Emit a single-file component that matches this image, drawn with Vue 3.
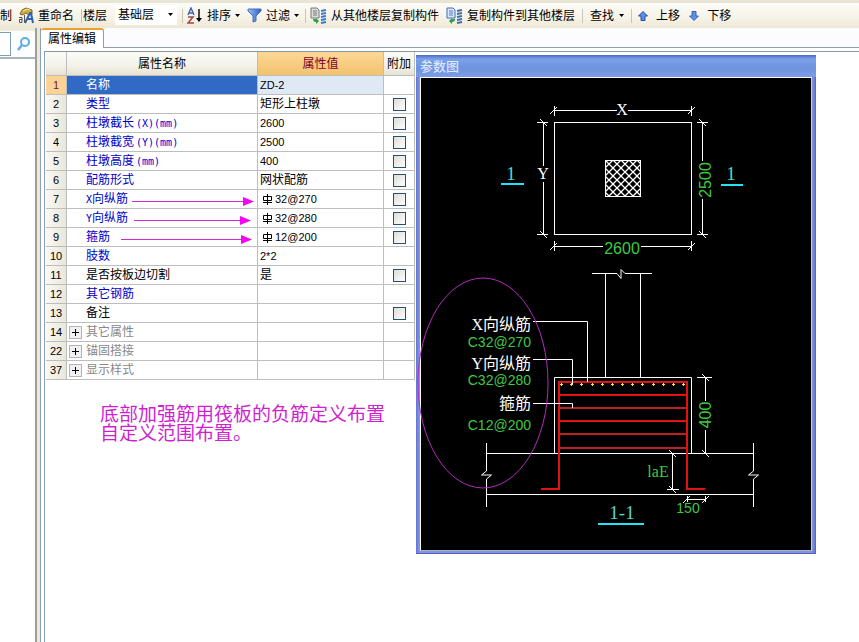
<script setup>
import { ref } from 'vue'

const floor = ref('基础层')
const keyword = ref('')

const rows = ref([
  { no: 1, name: '名称', value: 'ZD-2', type: 'current' },
  { no: 2, name: '类型', value: '矩形上柱墩', type: 'required', check: true, extra: false },
  { no: 3, name: '柱墩截长', unit: '(X)(mm)', value: '2600', type: 'required', check: true, extra: false },
  { no: 4, name: '柱墩截宽', unit: '(Y)(mm)', value: '2500', type: 'required', check: true, extra: false },
  { no: 5, name: '柱墩高度', unit: '(mm)', value: '400', type: 'required', check: true, extra: false },
  { no: 6, name: '配筋形式', value: '网状配筋', type: 'required', check: true, extra: false },
  { no: 7, prefix: 'X', name: '向纵筋', value: '32@270', rebar: true, type: 'required', check: true, extra: false },
  { no: 8, prefix: 'Y', name: '向纵筋', value: '32@280', rebar: true, type: 'required', check: true, extra: false },
  { no: 9, name: '箍筋', value: '12@200', rebar: true, type: 'required', check: true, extra: false },
  { no: 10, name: '肢数', value: '2*2', type: 'required' },
  { no: 11, name: '是否按板边切割', value: '是', check: true, extra: false },
  { no: 12, name: '其它钢筋', value: '', type: 'required' },
  { no: 13, name: '备注', value: '', check: true, extra: false },
  { no: 14, name: '其它属性', value: '', type: 'group' },
  { no: 22, name: '锚固搭接', value: '', type: 'group' },
  { no: 37, name: '显示样式', value: '', type: 'group' }
])

// main bars seen end-on, evenly spaced under the top stirrup
const dots = Array.from({ length: 13 }, (_, i) => 561 + Math.round(i * 10.17))
const stirrups = [395, 408, 421, 434, 448]

const isCjk = (text) => /[\u4e00-\u9fff]/.test(text)
</script>

<template>
  <div class="app">
    <header class="toolbar">
      <button class="tool first">制</button>
      <button class="tool rename">
        <svg class="icon" width="17" height="17" viewBox="0 0 17 17">
          <path d="M4 3l4-2 6 2v4l-3 1-3-2-4 2-2-1z" fill="#d0ae42" stroke="#7c6420" />
          <path d="M5 4l4-2 3 1" fill="none" stroke="#f6e9a0" />
          <path d="M7 16l5-10h1l2 10M9 12h6" fill="none" stroke="#2d62b8" stroke-width="2" />
          <path d="M1 10.500h3v5H1.500v-3H4M6.500 8v7.500" fill="none" stroke="#555" />
        </svg>
        重命名
      </button>
      <i class="sep"></i>
      <label class="floor-label" for="floor">楼层</label>
      <span class="combo">
        <select id="floor" v-model="floor">
          <option>基础层</option>
        </select>
        <i class="caret"></i>
      </span>
      <i class="sep after-combo"></i>
      <button class="tool sort">
        <svg class="icon" width="16" height="17" viewBox="0 0 16 17">
          <path d="M1 8l3-7 3 7M2 6h4" fill="none" stroke="#3f62b4" stroke-width="1.4" />
          <path d="M1 10h5l-5 6h6" fill="none" stroke="#a34848" stroke-width="1.5" />
          <path d="M12 2v12" stroke="#000" stroke-width="1.4" />
          <path d="M9 11h6l-3 4z" fill="#000" />
        </svg>
        排序<i class="caret"></i>
      </button>
      <button class="tool filter">
        <svg class="icon" width="15" height="15" viewBox="0 0 15 15">
          <defs>
            <linearGradient id="funnel"><stop offset="0" stop-color="#9cc0f4" /><stop offset="1" stop-color="#2c5cc0" /></linearGradient>
          </defs>
          <path d="M1 1h13v2L9 8v5l-3 1V8L1 3z" fill="url(#funnel)" stroke="#4470bd" />
        </svg>
        过滤<i class="caret"></i>
      </button>
      <i class="sep"></i>
      <button class="tool copy">
        <svg class="icon" width="17" height="17" viewBox="0 0 17 17">
          <path d="M1 1h6l2 2v8H1z" fill="#dcdcdc" stroke="#777" />
          <path d="M3 4h4M3 6h4M3 8h4" stroke="#777" />
          <path d="M11 4l5-1M11 7l5-1M11 10l5-1M11 13l5-1M11 16l5-1" stroke="#3e7ad0" stroke-width="2" />
          <path d="M3 12l3 0v-1l3 3-3 3v-2c-2 0-3-1-3-3z" fill="#2ba343" />
        </svg>
        从其他楼层复制构件
      </button>
      <button class="tool copy">
        <svg class="icon" width="17" height="17" viewBox="0 0 17 17">
          <path d="M1 1h6l2 2v8H1z" fill="#dce8ff" stroke="#3d68bb" />
          <path d="M3 4h4M3 6h4M3 8h4" stroke="#4d7dd0" />
          <path d="M11 4l5-1M11 7l5-1M11 10l5-1M11 13l5-1M11 16l5-1" stroke="#3e6fac" stroke-width="2" />
          <path d="M9 12H6v-1l-3 3 3 3v-2c2 0 3-1 3-3z" fill="#2ba343" />
        </svg>
        复制构件到其他楼层
      </button>
      <i class="sep"></i>
      <button class="tool find">查找<i class="caret"></i></button>
      <i class="sep"></i>
      <button class="tool move">
        <svg class="icon" width="10" height="10" viewBox="0 0 10 10">
          <path d="M5 0.500l4.500 4.500H7v4.500H3V5H0.500z" fill="#5c8fe6" stroke="#274da5" />
        </svg>
        上移
      </button>
      <button class="tool move">
        <svg class="icon" width="10" height="10" viewBox="0 0 10 10">
          <path d="M5 9.500L9.500 5H7V0.500H3V5H0.500z" fill="#5c8fe6" stroke="#3a62b8" />
        </svg>
        下移
      </button>
    </header>

    <div class="workspace">
      <aside class="sidebar">
        <div class="search">
          <input v-model="keyword" type="text" aria-label="搜索">
          <button class="search-button" aria-label="查找构件">
            <svg width="14" height="14" viewBox="0 0 14 14">
              <circle cx="8" cy="5" r="4" fill="#f2fbff" stroke="#62ace0" stroke-width="2" />
              <path d="M5 8l-4 5" stroke="#62ace0" stroke-width="2.500" />
            </svg>
          </button>
        </div>
      </aside>
      <div class="splitter"></div>

      <main class="editor">
        <nav class="tabs">
          <button class="tab">属性编辑</button>
        </nav>
        <div class="page">
          <section class="properties">
            <table>
              <colgroup>
                <col class="col-no">
                <col class="col-name">
                <col class="col-value">
                <col class="col-extra">
              </colgroup>
              <thead>
                <tr>
                  <th></th>
                  <th>属性名称</th>
                  <th class="active">属性值</th>
                  <th>附加</th>
                </tr>
              </thead>
              <tbody>
                <tr v-for="row in rows" :key="row.no" :class="row.type">
                  <td class="no">{{ row.no }}</td>
                  <td class="name">
                    <button v-if="row.type === 'group'" class="expand" :aria-label="`展开${row.name}`"></button>
                    <span v-if="row.prefix" class="latin">{{ row.prefix }}</span>{{ row.name }}<span v-if="row.unit" class="latin unit">{{ row.unit }}</span>
                  </td>
                  <td class="value" :class="{ cjk: isCjk(row.value) }">
                    <svg v-if="row.rebar" class="rebar" width="11" height="11" viewBox="0 0 11 11">
                      <path d="M1.500 2.500h8v4h-8zM5.500 0v11M1 8.500h9" fill="none" stroke="#000" />
                    </svg>{{ row.value }}
                  </td>
                  <td class="extra">
                    <input v-if="row.check" v-model="row.extra" type="checkbox" :aria-label="`附加${row.name}`">
                  </td>
                </tr>
              </tbody>
            </table>
            <svg class="arrows" width="369" height="328" viewBox="46 52 369 328">
              <g fill="none" stroke="#d428d4">
                <path d="M132 201.500H245M134 220.500H242M121 239.500H243" />
              </g>
              <path d="M243 197l11 4.500-11 4.500zM240 216l11 4.500-11 4.500zM241 235l11 4.500-11 4.500z" fill="#f800f8" />
            </svg>
            <p class="note">底部加强筋用筏板的负筋定义布置<br>自定义范围布置。</p>
          </section>

          <section class="figure-window">
            <h2>参数图</h2>
            <div class="canvas">
              <svg class="drawing" viewBox="421 78 390 472">
                <defs>
                  <pattern id="hatch" width="8" height="8" patternUnits="userSpaceOnUse" x="605" y="160">
                    <path d="M0 0l8 8M8 0l-8 8" stroke="#fff" stroke-width="1.300" />
                  </pattern>
                </defs>

                <!-- plan -->
                <g class="line">
                  <rect x="554.500" y="122.500" width="137" height="112" />
                  <rect x="605.500" y="160.500" width="35" height="36" fill="url(#hatch)" />
                  <path d="M554 110.500H617M628 110.500H692M554.500 106v10M691.500 106v10M550 114l7-7M688 114l7-7" />
                  <path d="M554 246.500H603M641 246.500H692M554.500 241v10M691.500 241v10M550 250l7-7M688 250l7-7" />
                  <path d="M543.500 122V166M543.500 182V235M537 122.500h11M537 234.500h11M540 119l7 7M540 231l7 7" />
                  <path d="M702.500 122V161M702.500 199V235M697 122.500h11M697 234.500h11M699 119l7 7M699 231l7 7" />
                </g>
                <text class="serif white" x="622" y="115">X</text>
                <text class="serif white" x="543" y="179">Y</text>
                <text class="number" x="622" y="254">2600</text>
                <text class="number" transform="translate(711 180) rotate(-90)">2500</text>
                <text class="mark" x="511" y="180">1</text>
                <text class="mark" x="731" y="180">1</text>
                <path class="underline" d="M501 184h23M721 185h22" />

                <!-- section 1-1 -->
                <g class="line">
                  <path d="M592 273.500H617l4 5v-9l4 4H652M605.500 274V377M640.500 274V377" />
                  <path d="M554.500 453V377.500H691.500V453M486 453.500H753M486 494.500H753" />
                  <path d="M486.500 443V471l-5 4h10l-5 4V507M753.500 443V471l-5 4h10l-5 4V507" />
                  <path d="M705.500 377V401M705.500 430V454M697 377.500h15M699 453.500h11M702 374l7 7M702 450l7 7" />
                  <path d="M672.500 453V490M667 489.500h12M669 450l7 7M669 486l7 7" />
                  <path d="M687 499.500H706M687.500 496v6M705.500 496v6M683 503l7-7M702 503l7-7" />
                </g>
                <g class="steel">
                  <path d="M541 489H559V382H687V489H705" />
                  <path v-for="(y, i) in stirrups" :key="y" :class="{ dim: i % 2 === 1 || i === 4 }" :d="`M560 ${y}H686`" />
                </g>
                <g class="line">
                  <path d="M533 321.500H587.500V382M533 359.500H572.500V384M533 403.500H572.500V408" />
                </g>
                <path v-for="x in dots" :key="x" class="dot" :d="`M${x - 1} 384.500h3M${x}.5 383v3`" />

                <text class="label" x="531" y="330"><tspan class="serif">X</tspan>向纵筋</text>
                <text class="spec" x="531" y="347">C32@270</text>
                <text class="label" x="531" y="369"><tspan class="serif">Y</tspan>向纵筋</text>
                <text class="spec" x="531" y="385">C32@280</text>
                <text class="label" x="531" y="409">箍筋</text>
                <text class="spec" x="531" y="430">C12@200</text>
                <text class="number" transform="translate(711 415) rotate(-90)">400</text>
                <text class="serif green" x="658" y="477">laE</text>
                <text class="spec middle" x="688" y="513">150</text>
                <text class="mark" x="622" y="519">1-1</text>
                <path class="underline" d="M598 524h46" />

                <ellipse class="circle" cx="483" cy="383" rx="65" ry="105" />
              </svg>
            </div>
          </section>
        </div>
      </main>
    </div>
  </div>
</template>

<style>
body { background:#fff; }
</style>

<style scoped>
.app { display:flex; flex-direction:column; min-height:100vh; overflow-x:hidden; font:12px/18px "Liberation Sans", "Noto Sans CJK SC", sans-serif; color:#000; }
.app *, .app *::before, .app *::after { box-sizing:border-box; }
button, select, input { margin:0; padding:0; border:0; background:none; font:inherit; color:inherit; }

.toolbar { display:flex; align-items:center; height:28px; border-top:3px solid #e9e5d6; background:linear-gradient(#fcfbf7, #f6f3e8 60%, #ede7d5); white-space:nowrap; }
.tool { display:flex; flex:none; align-items:center; gap:4px; height:22px; }
.icon { flex:none; display:block; }
.first { width:12px; justify-content:flex-end; }
.rename { gap:3px; margin-left:6px; }
.sep { flex:none; width:1px; height:14px; margin:0 7px; background:#c9c5b4; }
.rename + .sep { margin-right:1px; }
.filter + .sep { margin:0 4px 0 6px; }
.find + .sep { margin-right:6px; }
.caret { flex:none; width:5px; height:3px; background:#000; clip-path:polygon(0 0, 100% 0, 50% 100%); }
.floor-label { margin-right:8px; }
.combo { display:flex; flex:none; align-items:center; width:62px; height:20px; padding:0 4px 0 3px; background:#fff; margin-bottom:2px; }
.combo select { flex:1; appearance:none; height:18px; outline:none; }
.after-combo { margin:0 4px 0 5px; }
.filter { margin-left:7px; }
.copy + .copy { margin-left:7px; }
.find { gap:5px; }
.move { gap:8px; margin-right:9px; }

.workspace { display:flex; flex:1; }
.sidebar { flex:none; width:35px; background:#fff; }
.search { display:flex; align-items:center; height:31px; border-top:3px solid #ece8da; border-bottom:2px solid #a9b4bd; background:#fcfdfe; }
.search input { width:11px; height:24px; border:1px solid #7f9db9; border-left:0; background:#fff; }
.search-button { display:flex; margin-left:6px; cursor:pointer; }
.splitter { flex:none; width:5px; border-left:2px solid #a29f90; background:#ece9dc; }
.editor { display:flex; flex:1; flex-direction:column; min-width:0; border-left:1px solid #8ba1b8; }
.tabs { display:flex; height:20px; background:#fcfcfe; }
.tabs::after { content:""; flex:1; border-bottom:1px solid #919bab; }
.tab { flex:none; width:63px; height:20px; border-top:2px solid #eda02c; border-right:1px solid #919bab; border-radius:3px 3px 0 0; background:#fff; text-align:center; }
.page { display:flex; flex:1; align-items:flex-start; margin:3px 0 0 3px; padding-left:1px; border-top:1px solid #8796aa; border-left:1px solid #8ba1b8; }

.properties { position:relative; flex:none; width:369px; }
table { width:100%; table-layout:fixed; border-spacing:0; }
.col-no { width:21px; }
.col-name { width:191px; }
.col-value { width:126px; }
.col-extra { width:31px; }
th, td { padding:0; border-right:1px solid #bdbdbd; border-bottom:1px solid #bdbdbd; white-space:nowrap; }
th { height:24px; font-weight:400; background:linear-gradient(#fbfaf5, #f4f2ea 60%, #e6e2d2); }
th.active { color:#7c0028; background:linear-gradient(#fbd797, #f3c36d); }
td { height:19px; line-height:18px; }
.no { font-size:11px; text-align:center; background:linear-gradient(90deg, #faf9f5, #e9e6da); }
.name { position:relative; padding-left:19px; }
.value { padding-left:2px; font-size:11px; }
.value.cjk { font-size:12px; }
.latin { font-family:"DejaVu Sans Mono", monospace; font-size:10px; line-height:1; }
.unit { margin-left:2px; }
.required .name { color:#0000c8; }
.group .name { color:#888; }
.current .no { background:#fcd394; color:#6e2030; }
.current .name { background:#316ac5; color:#fff; }
.current .value { background:#dfe9f5; }
.rebar { margin:0 2px; vertical-align:-2px; }
.extra { text-align:center; }
.extra input { display:block; width:13px; height:13px; margin:0 auto; appearance:none; border:1px solid #1c5180; background:linear-gradient(135deg, #dcdcd7, #fff); }
.extra input:checked { background:#1c5180; }
.expand { position:absolute; left:2px; top:3px; width:13px; height:13px; border:1px solid #b4b4b4; background:linear-gradient(#000, #000) center/7px 1px no-repeat, linear-gradient(#000, #000) center/1px 7px no-repeat, #f1f1f1; }
.arrows { position:absolute; left:0; top:0; pointer-events:none; }
.note { margin:25px 0 0 54px; font-size:19px; line-height:19px; color:#cf1fcf; white-space:nowrap; }

.figure-window { flex:none; width:400px; margin:3px 0 0 1px; padding:0 4px 3px; background:linear-gradient(90deg, #6273d6, #7f93df 3px, #7f93df 397px, #5360bc); box-shadow:inset 0 -1px #5560b8; }
.figure-window h2 { height:22px; margin:0 -4px; padding:2px 0 0 4px; font-size:13px; line-height:20px; font-weight:500; color:#dbe7fb; background:linear-gradient(#4c68c8, #7ba0e8 4px, #6f93e0 60%, #7d9ce6); }
.canvas { border:1px solid #fff; border-right-color:#c8cbe0; border-bottom-color:#b0b4c8; background:#000; }
.drawing { display:block; width:100%; overflow:visible; }
.line { fill:none; stroke:#fff; }
.steel { fill:none; stroke:#e31212; stroke-width:2; }
.steel .dim { stroke:#bd2020; }
.dot { stroke:#f6e44c; }
.underline { stroke:#22e4f4; stroke-width:2; }
.circle { fill:none; stroke:#b52cc0; }
text { text-anchor:middle; }
.serif { font-family:"Liberation Serif", serif; font-size:16px; }
.white { fill:#fff; }
.number { font-size:16px; fill:#3fc93f; }
.spec { font-size:14px; fill:#3fc93f; text-anchor:end; }
.middle { text-anchor:middle; }
.green { fill:#3fc93f; }
.label { font-size:16px; fill:#fff; text-anchor:end; }
.mark { font-family:"Liberation Serif", serif; font-size:19px; fill:#4fd8d0; }
</style>
